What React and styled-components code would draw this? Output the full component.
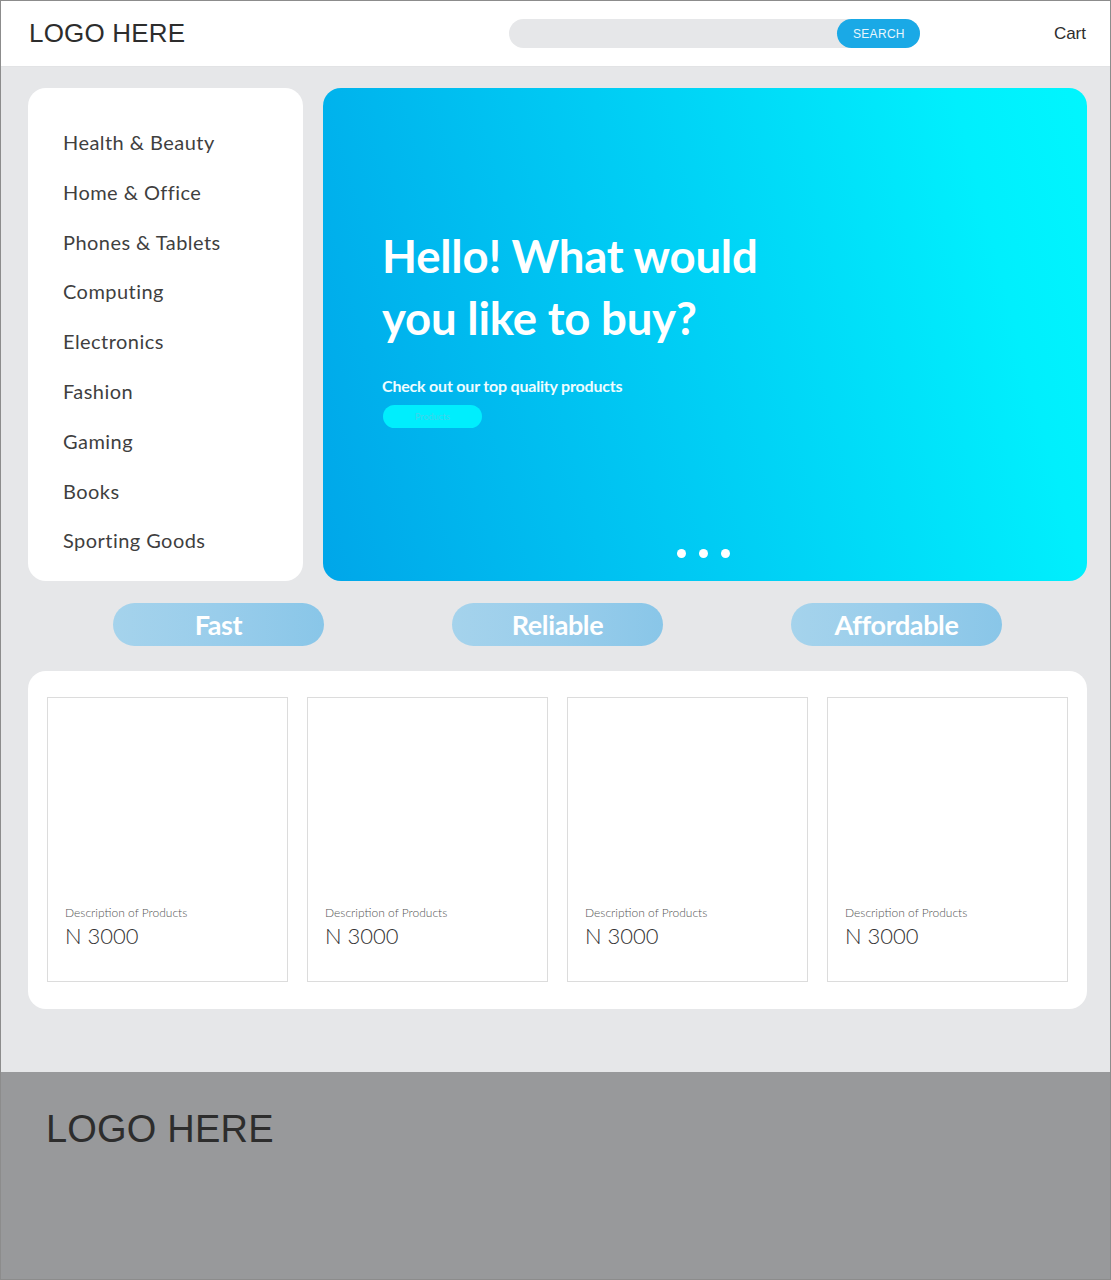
import React from "react";
import styled, { createGlobalStyle } from "styled-components";

const Global = createGlobalStyle`
  html, body { margin: 0; padding: 0; background: #fff; }
  * { box-sizing: border-box; }
`;

const Frame = styled.div`
  width: 1111px;
  height: 1280px;
  border: 1px solid #8c8c8c;
  display: flex;
  flex-direction: column;
  overflow: hidden;
  font-family: Lato, "Open Sans", sans-serif;
`;

const Header = styled.header`
  height: 66px;
  flex: none;
  background: #fff;
  display: flex;
  align-items: center;
  padding: 0 24px 0 28px;
  border-bottom: 1px solid #e2e3e5;
`;

const Logo = styled.div`
  font-family: "Liberation Sans", Arial, sans-serif;
  font-size: ${(p) => p.$size}px;
  color: #2d2d2d;
  letter-spacing: 0.2px;
`;

const SearchBar = styled.div`
  margin-left: 324px;
  width: 411px;
  height: 29px;
  border-radius: 15px;
  background: #e6e7e9;
  display: flex;
  justify-content: flex-end;
`;

const SearchButton = styled.button`
  width: 83px;
  height: 29px;
  border: none;
  border-radius: 15px;
  background: #1aa9e6;
  color: #e8f6fd;
  font-family: "Liberation Sans", Arial, sans-serif;
  font-size: 12px;
  letter-spacing: 0.3px;
  padding: 0;
`;

const Cart = styled.div`
  margin-left: auto;
  font-family: "Liberation Sans", Arial, sans-serif;
  font-size: 17px;
  color: #2d2d2d;
`;

const Main = styled.main`
  flex: none;
  height: 1005px;
  background: #e6e7e9;
  padding: 21px 23px 0 27px;
  display: flex;
  flex-direction: column;
`;

const TopRow = styled.div`
  display: flex;
  gap: 20px;
  height: 493px;
`;

const Sidebar = styled.nav`
  width: 275px;
  background: #fff;
  border-radius: 18px;
  padding: 30px 0 0 35px;
  display: flex;
  flex-direction: column;
`;

const Category = styled.a`
  font-size: 20px;
  line-height: 49.8px;
  color: #3f3f3f;
  font-weight: 400;
  letter-spacing: 0.45px;
`;

const Hero = styled.section`
  flex: 1;
  border-radius: 18px;
  background: linear-gradient(75deg, #00a6e9 0%, #00c8f3 40%, #00effd 85%, #00f6fe 100%);
  padding: 137px 0 0 59px;
  display: flex;
  flex-direction: column;
  position: relative;
`;

const HeroTitle = styled.h1`
  margin: 0;
  font-size: 45.5px;
  line-height: 62px;
  font-weight: 700;
  color: #fff;
  letter-spacing: -0.2px;
`;

const HeroSub = styled.p`
  margin: 27px 0 0;
  font-size: 16px;
  font-weight: 700;
  color: #eefcff;
  letter-spacing: -0.2px;
`;

const HeroButton = styled.button`
  margin-top: 10px;
  margin-left: 1px;
  width: 99px;
  height: 23px;
  border: none;
  border-radius: 12px;
  background: #00eefd;
  color: #3fd5ec;
  font-family: Lato, sans-serif;
  font-size: 9px;
  padding: 0;
`;

const Dots = styled.div`
  position: absolute;
  left: 354px;
  bottom: 23px;
  display: flex;
  gap: 13px;
`;

const Dot = styled.span`
  width: 9px;
  height: 9px;
  border-radius: 50%;
  background: #fff;
`;

const Pills = styled.div`
  margin-top: 22px;
  display: flex;
  justify-content: center;
  gap: 128px;
`;

const Pill = styled.div`
  width: 211px;
  height: 43px;
  border-radius: 22px;
  background: linear-gradient(90deg, #a5d3ec 0%, #99cdeb 50%, #89c6e8 100%);
  color: #fff;
  font-size: 27px;
  font-weight: 700;
  display: flex;
  align-items: center;
  justify-content: center;
  letter-spacing: -0.4px;
`;

const Products = styled.section`
  margin-top: 25px;
  height: 338px;
  background: #fff;
  border-radius: 18px;
  padding: 26px 18px 0 19px;
  display: grid;
  grid-template-columns: 241px 241px 241px 241px;
  column-gap: 19px;
  align-content: start;
`;

const Card = styled.article`
  height: 285px;
  border: 1px solid #dcdcdc;
  padding: 0 0 32px 17px;
  display: flex;
  flex-direction: column;
  justify-content: flex-end;
`;

const Desc = styled.div`
  font-size: 12px;
  color: #555;
  font-weight: 300;
`;

const Price = styled.div`
  margin-top: 2px;
  font-size: 22px;
  font-weight: 300;
  color: #333;
`;

const Footer = styled.footer`
  flex: 1;
  background: #98999b;
  padding: 36px 0 0 45px;
`;

const categories = [
  "Health & Beauty",
  "Home & Office",
  "Phones & Tablets",
  "Computing",
  "Electronics",
  "Fashion",
  "Gaming",
  "Books",
  "Sporting Goods",
];

export default function App() {
  return (
    <>
      <Global />
      <Frame>
        <Header>
          <Logo $size={26}>LOGO HERE</Logo>
          <SearchBar>
            <SearchButton>SEARCH</SearchButton>
          </SearchBar>
          <Cart>Cart</Cart>
        </Header>
        <Main>
          <TopRow>
            <Sidebar>
              {categories.map((c) => (
                <Category key={c}>{c}</Category>
              ))}
            </Sidebar>
            <Hero>
              <HeroTitle>
                Hello! What would
                <br />
                you like to buy?
              </HeroTitle>
              <HeroSub>Check out our top quality products</HeroSub>
              <HeroButton>Products</HeroButton>
              <Dots>
                <Dot />
                <Dot />
                <Dot />
              </Dots>
            </Hero>
          </TopRow>
          <Pills>
            <Pill>Fast</Pill>
            <Pill>Reliable</Pill>
            <Pill>Affordable</Pill>
          </Pills>
          <Products>
            {[0, 1, 2, 3].map((i) => (
              <Card key={i}>
                <Desc>Description of Products</Desc>
                <Price>N 3000</Price>
              </Card>
            ))}
          </Products>
        </Main>
        <Footer>
          <Logo $size={38}>LOGO HERE</Logo>
        </Footer>
      </Frame>
    </>
  );
}
